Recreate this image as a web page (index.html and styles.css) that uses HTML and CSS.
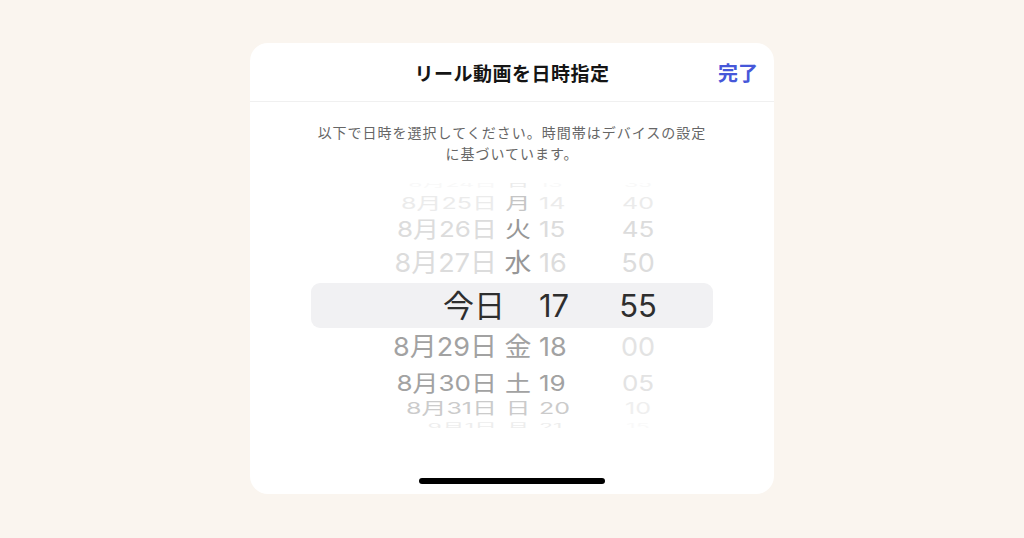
FILE: index.html
```html
<!DOCTYPE html>
<html lang="ja">
<head>
    <meta charset="UTF-8">
    <meta name="viewport" content="width=device-width, initial-scale=1.0">
    <title>リール動画を日時指定</title>
    <link rel="stylesheet" href="styles.css">
</head>
<body>
    <main>
        <div class="sheet">
            <div class="sheet-header">
                <span></span>
                <h1>リール動画を日時指定</h1>
                <button class="done-button">完了</button>
            </div>

            <p class="hint">以下で日時を選択してください。時間帯はデバイスの設定<br>に基づいています。</p>

            <div class="picker">
                <div class="row up far4">
                    <span class="date">8月24日</span><span class="wday">日</span><span class="hour">13</span><span class="min">35</span>
                </div>
                <div class="row up far3">
                    <span class="date">8月25日</span><span class="wday">月</span><span class="hour">14</span><span class="min">40</span>
                </div>
                <div class="row up far2">
                    <span class="date">8月26日</span><span class="wday">火</span><span class="hour">15</span><span class="min">45</span>
                </div>
                <div class="row up far1">
                    <span class="date">8月27日</span><span class="wday">水</span><span class="hour">16</span><span class="min">50</span>
                </div>
                <div class="row selected">
                    <span class="date today">今日</span><span class="wday"></span><span class="hour">17</span><span class="min">55</span>
                </div>
                <div class="row down far1">
                    <span class="date">8月29日</span><span class="wday">金</span><span class="hour">18</span><span class="min">00</span>
                </div>
                <div class="row down far2">
                    <span class="date">8月30日</span><span class="wday">土</span><span class="hour">19</span><span class="min">05</span>
                </div>
                <div class="row down far3">
                    <span class="date">8月31日</span><span class="wday">日</span><span class="hour">20</span><span class="min">10</span>
                </div>
                <div class="row down far4">
                    <span class="date">9月1日</span><span class="wday">月</span><span class="hour">21</span><span class="min">15</span>
                </div>
            </div>

            <div class="home-bar"></div>
        </div>
    </main>
</body>
</html>
```

FILE: styles.css
```css
/* Page */
body {
    margin: 0;
    background-color: #faf5ef;
    font-family: "Inter", "Noto Sans CJK JP", sans-serif;
}

main {
    display: flex;
    justify-content: center;
    padding-top: 43px;
}

/* Bottom sheet card */
.sheet {
    width: 524px;
    height: 451px;
    background-color: #fff;
    border-radius: 18px;
    display: flex;
    flex-direction: column;
}

.sheet-header {
    height: 58px;
    display: grid;
    grid-template-columns: 1fr auto 1fr;
    align-items: center;
    border-bottom: 1px solid #f0f0f0;
}

.sheet-header h1 {
    margin: 0;
    font-family: "Noto Sans CJK JP", sans-serif;
    font-size: 19px;
    font-weight: 700;
    letter-spacing: 0.5px;
    color: #151515;
}

.done-button {
    justify-self: end;
    margin-right: 16px;
    padding: 0;
    border: none;
    background: none;
    font-family: "Noto Sans CJK JP", sans-serif;
    font-size: 20px;
    font-weight: 700;
    color: #4657d9;
    cursor: pointer;
}

.hint {
    margin: 20px 0 0;
    text-align: center;
    font-family: "Noto Sans CJK JP", sans-serif;
    font-size: 14px;
    line-height: 21px;
    letter-spacing: 1px;
    color: #666;
}

/* Date / time wheel */
.picker {
    margin: 19px 61px 0;
    display: flex;
    flex-direction: column;
}

.row {
    display: grid;
    grid-template-columns: 186px 42px 60px 78px;
    grid-template-rows: 100%;
    align-items: center;
    font-size: 27px;
    line-height: 1.2;
    overflow: hidden;
    white-space: nowrap;
}

.row span {
    display: block;
}

.row .date {
    justify-self: end;
}

.row .wday {
    justify-self: center;
}

.row .min {
    justify-self: center;
}

/* rows shrink as they roll away from the centre */
.far1 { height: 39px; }
.far2 { height: 31px; font-size: 26px; }
.far3 { height: 20px; font-size: 25px; opacity: 0.55; }
.far4 { height: 10px; font-size: 23px; opacity: 0.18; }

.far1 span { transform: scaleY(0.97); }
.far2 span { transform: scaleY(0.85); }
.far3 span { transform: scaleY(0.64); }
.up.far4 span { transform: translateY(-4px) scaleY(0.4); }
.down.far4 span { transform: translateY(4px) scaleY(0.4); }

.up .date,
.up .hour,
.up .min {
    color: #dcdcdc;
}

.up .wday {
    color: #979797;
}

.down .date,
.down .wday,
.down .hour {
    color: #a2a2a2;
}

.down .min {
    color: #e3e3e3;
}

.row.selected {
    height: 45px;
    font-size: 31px;
    color: #2e2e2e;
    background-color: #f1f1f3;
    border-radius: 9px;
}

.row .today {
    margin-right: -8px;
}

/* Home indicator */
.home-bar {
    width: 186px;
    height: 6px;
    margin: auto auto 10px;
    border-radius: 3px;
    background-color: #000;
}
```
